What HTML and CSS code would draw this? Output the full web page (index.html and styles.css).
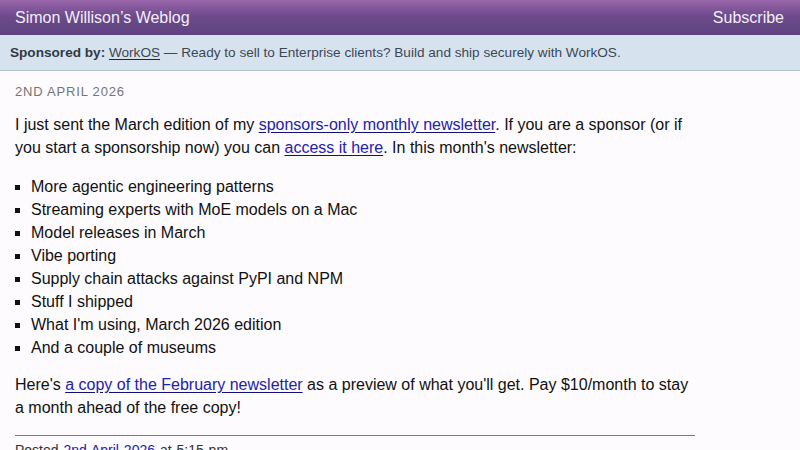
FILE: index.html
```html
<!DOCTYPE html>
<html>
<head>
<meta charset="utf-8">
<link rel="stylesheet" href="styles.css">
</head>
<body>
<header class="top">
  <a class="site-title" href="#">Simon Willison’s Weblog</a>
  <a class="subscribe" href="#">Subscribe</a>
</header>
<div class="sponsor">
  <strong>Sponsored by:</strong> <a href="#">WorkOS</a> — Ready to sell to Enterprise clients? Build and ship securely with WorkOS.
</div>
<main class="content">
  <div class="date">2nd April 2026</div>
  <p>I just sent the March edition of my <a href="#">sponsors-only monthly newsletter</a>. If you are a sponsor (or if you start a sponsorship now) you can <a href="#">access it here</a>. In this month's newsletter:</p>
  <ul class="items">
    <li>More agentic engineering patterns</li>
    <li>Streaming experts with MoE models on a Mac</li>
    <li>Model releases in March</li>
    <li>Vibe porting</li>
    <li>Supply chain attacks against PyPI and NPM</li>
    <li>Stuff I shipped</li>
    <li>What I'm using, March 2026 edition</li>
    <li>And a couple of museums</li>
  </ul>
  <p>Here's <a href="#">a copy of the February newsletter</a> as a preview of what you'll get. Pay $10/month to stay a month ahead of the free copy!</p>
  <div class="meta">Posted <a href="#">2nd April 2026</a> at 5:15 pm</div>
</main>
</body>
</html>
```
FILE: styles.css
```css
html, body {
  margin: 0;
  padding: 0;
}
body {
  background: #fdfbfd;
  font-family: "Liberation Sans", Arial, sans-serif;
  color: #111;
}
.top {
  height: 35px;
  box-sizing: border-box;
  display: flex;
  align-items: center;
  justify-content: space-between;
  padding: 0 16px 0 15px;
  background: linear-gradient(to bottom, #9a66aa 0%, #6d4b8c 45%, #5e4380 100%);
}
.top a {
  color: #f4eef8;
  text-decoration: none;
  font-size: 16px;
}
.sponsor {
  background: #d6e3ef;
  border-bottom: 1px solid #b4c2d0;
  color: #3d4754;
  font-size: 13.6px;
  line-height: 35px;
  height: 36px;
  box-sizing: border-box;
  padding: 0 10px;
  white-space: nowrap;
}
.sponsor strong {
  color: #2f3a46;
}
.sponsor a {
  color: #3d4754;
  text-decoration-color: #1a1a8c;
  text-underline-offset: 2px;
}
.content {
  width: 680px;
  padding: 0 15px;
}
.date {
  text-transform: uppercase;
  font-size: 13px;
  color: #757575;
  letter-spacing: 0.8px;
  margin-top: 13px;
}
.content p {
  font-size: 16px;
  line-height: 23px;
  margin: 14px 0 0;
}
.content a {
  color: #2222aa;
  text-decoration-color: #10107a;
  text-underline-offset: 2px;
}
.items {
  list-style: square;
  margin: 16px 0 0;
  padding-left: 16px;
  font-size: 16px;
  line-height: 23px;
}
.items + p {
  margin-top: 14px;
}
.meta {
  margin-top: 16px;
  border-top: 1px solid #8b6a9c;
  padding-top: 6px;
  font-size: 14px;
  word-spacing: 1px;
  color: #333;
}
```
